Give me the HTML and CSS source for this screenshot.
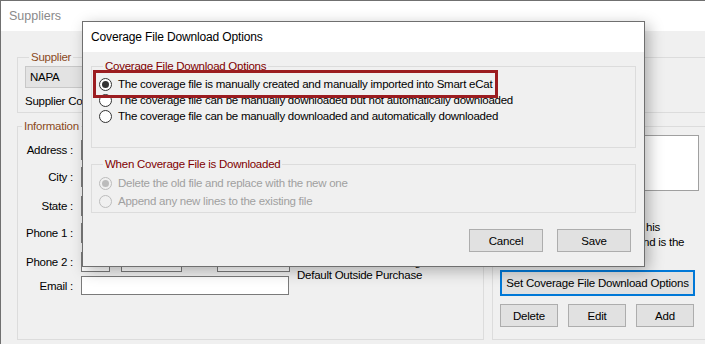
FILE: index.html
```html
<!DOCTYPE html>
<html lang="en">
<head>
    <meta charset="UTF-8">
    <title>Suppliers</title>
    <link rel="stylesheet" href="styles.css">
</head>
<body>
    <div class="window">
        <div class="titlebar">Suppliers</div>
        <div class="content">
            <fieldset class="group supplier">
                <legend>Supplier</legend>
                <div class="readonly">NAPA</div>
                <div class="code-label">Supplier Code :</div>
            </fieldset>

            <div class="lower">
                <fieldset class="group info">
                    <legend>Information</legend>
                    <div class="row r-address"><span class="lbl">Address :</span><span class="box wide"></span></div>
                    <div class="row r-city"><span class="lbl">City :</span><span class="box wide"></span></div>
                    <div class="row r-state"><span class="lbl">State :</span><span class="box wide"></span></div>
                    <div class="row r-phone1"><span class="lbl">Phone 1 :</span><span class="box wide"></span></div>
                    <div class="row r-phone2">
                        <span class="lbl">Phone 2 :</span>
                        <span class="box area"></span>
                        <span class="box number"></span>
                        <span class="ext">Ext :</span>
                        <span class="box extbox"></span>
                        <span class="pricing">Outside Purchase Pricing :<br>Default Outside Purchase</span>
                    </div>
                    <div class="row r-email"><span class="lbl">Email :</span><span class="box wide"></span></div>
                </fieldset>

                <fieldset class="group coverage">
                    <legend>Coverage File</legend>
                    <div class="notes"></div>
                    <div class="hint"><span class="h1">his</span><span class="h2">nd is the</span></div>
                    <button class="btn focus">Set Coverage File Download Options</button>
                    <div class="btn-row">
                        <button class="btn">Delete</button>
                        <button class="btn">Edit</button>
                        <button class="btn">Add</button>
                    </div>
                </fieldset>
            </div>
        </div>
    </div>

    <!-- modal dialog over the window -->
    <div class="dialog">
        <div class="dlg-title">Coverage File Download Options</div>
        <div class="dlg-body">
            <fieldset class="dgroup first">
                <legend>Coverage File Download Options</legend>
                <label class="opt"><span class="radio checked"></span>The coverage file is manually created and manually imported into Smart eCat</label>
                <label class="opt"><span class="radio"></span>The coverage file can be manually downloaded but not automatically downloaded</label>
                <label class="opt"><span class="radio"></span>The coverage file can be manually downloaded and automatically downloaded</label>
            </fieldset>

            <fieldset class="dgroup second">
                <legend>When Coverage File is Downloaded</legend>
                <label class="opt off"><span class="radio checked"></span>Delete the old file and replace with the new one</label>
                <label class="opt off"><span class="radio"></span>Append any new lines to the existing file</label>
            </fieldset>

            <div class="dlg-buttons">
                <button class="btn">Cancel</button>
                <button class="btn">Save</button>
            </div>
        </div>
        <div class="highlight"></div>
    </div>
</body>
</html>
```

FILE: styles.css
```css
body {
    margin: 0;
    width: 705px;
    height: 344px;
    overflow: hidden;
    position: relative;
    font-family: 'Liberation Sans', Arial, sans-serif;
    font-size: 11.5px;
    letter-spacing: -0.25px;
    color: #000;
    background-color: #f0f0f0;
}
.window {
    height: 344px;
    border-top: 1px solid #707070;
    border-left: 1px solid #707070;
    box-sizing: border-box;
}
.titlebar {
    height: 30px;
    line-height: 30px;
    background-color: #fff;
    color: #8a8a8a;
    font-size: 12.5px;
    letter-spacing: 0;
    padding-left: 8px;
}
.content {
    padding: 19px 0 0 16px;
}
fieldset {
    margin: 0;
    border: 1px solid #dcdcdc;
    box-sizing: border-box;
    flex-shrink: 0;
}
legend {
    padding: 0 2px;
    margin-left: 4px;
    line-height: 14px;
}
.group legend {
    color: #8b4a1c;
}
.supplier {
    width: 700px;
    height: 63px;
    padding: 2px 0 0 7px;
}
.readonly {
    width: 90px;
    height: 20px;
    line-height: 20px;
    padding-left: 4px;
    background-color: #e3e3e3;
    border: 1px solid #c8c8c8;
}
.code-label {
    margin-top: 7px;
}
.lower {
    display: flex;
    gap: 8px;
    margin-top: 6px;
}
.info {
    width: 467px;
    height: 221px;
    padding: 7px 0 0 0;
}
.row {
    display: flex;
    align-items: center;
    height: 20px;
}
.r-city { margin-top: 7px; }
.r-state { margin-top: 9px; }
.r-phone1 { margin-top: 7px; }
.r-phone2 { margin-top: 9px; }
.r-email { margin-top: 4px; height: 19px; }
.lbl {
    width: 55px;
    text-align: right;
    margin-right: 8px;
}
.box {
    height: 100%;
    box-sizing: border-box;
    background-color: #fff;
    border: 1px solid #7a7a7a;
}
.wide { width: 208px; }
.area { width: 29px; }
.number { width: 61px; margin-left: 11px; }
.ext { width: 35px; text-align: center; }
.extbox { width: 73px; }
.pricing {
    margin-left: 7px;
    line-height: 13px;
    align-self: flex-start;
    margin-top: 4px;
}
.coverage {
    width: 220px;
    height: 221px;
    padding: 2px 0 0 7px;
}
.notes {
    width: 199px;
    height: 56px;
    box-sizing: border-box;
    background-color: #fff;
    border: 1px solid #a0a0a0;
}
.hint {
    display: flex;
    flex-direction: column;
    margin: 29px 0 0 143px;
    line-height: 15px;
}
.h1 { padding-left: 3px; }
.btn {
    font-family: inherit;
    font-size: 11.5px;
    letter-spacing: -0.2px;
    color: #000;
    background-color: #e1e1e1;
    border: 1px solid #adadad;
    padding: 0;
    height: 23px;
    white-space: nowrap;
}
.btn.focus {
    display: block;
    width: 195px;
    height: 26px;
    margin-top: 20px;
    border: 2px solid #0078d7;
}
.btn-row {
    display: flex;
    gap: 10px;
    margin-top: 8px;
}
.btn-row .btn { width: 58px; }

/* dialog */
.dialog {
    position: absolute;
    left: 82px;
    top: 21px;
    width: 563px;
    height: 246px;
    box-sizing: border-box;
    border: 1px solid #6f6f6f;
    background-color: #f0f0f0;
    box-shadow: 4px 4px 14px rgba(0, 0, 0, 0.28);
}
.dlg-title {
    height: 30px;
    line-height: 30px;
    background-color: #fff;
    padding-left: 8px;
    font-size: 12px;
    letter-spacing: -0.15px;
}
.dlg-body {
    padding: 7px 8px 0 8px;
}
.dgroup {
    width: 545px;
    padding: 3px 0 0 7px;
}
.dgroup legend {
    color: #800000;
}
.first { height: 89px; }
.second {
    height: 56px;
    margin-top: 9px;
}
.opt {
    display: flex;
    align-items: center;
    height: 16px;
}
.second .opt { height: 18px; }
.radio {
    width: 13px;
    height: 13px;
    box-sizing: border-box;
    border: 1px solid #333;
    border-radius: 50%;
    background-color: #fff;
    margin-right: 6px;
    position: relative;
}
.radio.checked::after {
    content: '';
    position: absolute;
    left: 2px;
    top: 2px;
    width: 7px;
    height: 7px;
    border-radius: 50%;
    background-color: #333;
}
.off { color: #a0a0a0; }
.off .radio {
    border-color: #bcbcbc;
    background-color: #f0f0f0;
}
.off .radio.checked::after { background-color: #bcbcbc; }
.dlg-buttons {
    display: flex;
    justify-content: flex-end;
    gap: 14px;
    margin-top: 16px;
    padding-right: 5px;
}
.dlg-buttons .btn { width: 74px; }
.highlight {
    position: absolute;
    left: 10px;
    top: 48px;
    width: 405px;
    height: 28px;
    box-sizing: border-box;
    border: 3px solid #9b1c20;
}
```
